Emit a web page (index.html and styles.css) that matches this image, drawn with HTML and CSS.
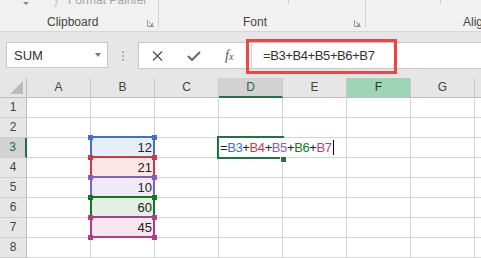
FILE: index.html
```html
<!DOCTYPE html>
<html lang="en">
<head>
    <meta charset="UTF-8">
    <title>Excel - SUM formula</title>
    <link rel="stylesheet" href="styles.css">
</head>
<body>
    <div class="ribbon">
        <div class="group clipboard">
            <div class="group-top">
                <span class="paste-arrow"></span>
                <svg class="brush" width="14" height="16" viewBox="0 0 14 16">
                    <path d="M2 6 L8 1 L12 5 L7 10 Z" fill="#d2d2d2"/>
                    <path d="M7 10 L5 15" stroke="#d2d2d2" stroke-width="2"/>
                </svg>
                <span class="faded">Format Painter</span>
            </div>
            <div class="group-label">
                <span>Clipboard</span>
                <svg class="launcher" width="7" height="7" viewBox="0 0 7 7">
                    <path d="M0.5 0 V6.5 H7" fill="none" stroke="#999" stroke-width="1"/>
                    <path d="M2 2 L5.5 5.5 M3 5.5 H5.5 V3" fill="none" stroke="#999" stroke-width="1"/>
                </svg>
            </div>
        </div>
        <div class="sep"></div>
        <div class="group font">
            <div class="group-top"><span class="tick tick-font"></span></div>
            <div class="group-label">
                <span>Font</span>
                <svg class="launcher" width="7" height="7" viewBox="0 0 7 7">
                    <path d="M0.5 0 V6.5 H7" fill="none" stroke="#999" stroke-width="1"/>
                    <path d="M2 2 L5.5 5.5 M3 5.5 H5.5 V3" fill="none" stroke="#999" stroke-width="1"/>
                </svg>
            </div>
        </div>
        <div class="sep"></div>
        <div class="group align">
            <div class="group-top"><span class="tick tick-align"></span></div>
            <div class="group-label"><span>Alig</span></div>
        </div>
    </div>

    <div class="formula-bar">
        <div class="name-box">
            <span>SUM</span>
            <span class="drop"></span>
        </div>
        <div class="grip"></div>
        <div class="formula-box">
            <div class="fx-buttons">
                <svg class="btn-cancel" width="11" height="10" viewBox="0 0 11 10">
                    <path d="M1 0.5 L10 9.5 M10 0.5 L1 9.5" stroke="#555" stroke-width="1.4"/>
                </svg>
                <svg class="btn-enter" width="14" height="10" viewBox="0 0 14 10">
                    <path d="M1 5 L5 9 L13 1" fill="none" stroke="#666" stroke-width="2"/>
                </svg>
                <span class="fx">f<sub>x</sub></span>
            </div>
            <div class="formula-input">=B3+B4+B5+B6+B7</div>
        </div>
        <div class="highlight"></div>
    </div>

    <div class="sheet">
        <div class="corner"><span class="corner-tri"></span></div>
        <div class="ch">A</div>
        <div class="ch">B</div>
        <div class="ch">C</div>
        <div class="ch col-active">D</div>
        <div class="ch">E</div>
        <div class="ch col-hover">F</div>
        <div class="ch">G</div>
        <div class="ch"></div>

        <div class="rh">1</div>
        <div class="c"></div><div class="c"></div><div class="c"></div><div class="c"></div><div class="c"></div><div class="c"></div><div class="c"></div><div class="c"></div>

        <div class="rh">2</div>
        <div class="c"></div><div class="c"></div><div class="c"></div><div class="c"></div><div class="c"></div><div class="c"></div><div class="c"></div><div class="c"></div>

        <div class="rh row-active">3</div>
        <div class="c"></div>
        <div class="c num ref ref-blue"><i class="h tl"></i><i class="h tr"></i>12</div>
        <div class="c"></div>
        <div class="c active">
            <div class="editor">=<span class="t-blue">B3</span>+<span class="t-red">B4</span>+<span class="t-purple">B5</span>+<span class="t-green">B6</span>+<span class="t-pink">B7</span><span class="caret"></span></div>
            <span class="fill-handle"></span>
        </div>
        <div class="c"></div><div class="c"></div><div class="c"></div><div class="c"></div>

        <div class="rh">4</div>
        <div class="c"></div>
        <div class="c num ref ref-red"><i class="h tl"></i><i class="h tr"></i>21</div>
        <div class="c"></div><div class="c"></div><div class="c"></div><div class="c"></div><div class="c"></div><div class="c"></div>

        <div class="rh">5</div>
        <div class="c"></div>
        <div class="c num ref ref-purple"><i class="h tl"></i><i class="h tr"></i>10</div>
        <div class="c"></div><div class="c"></div><div class="c"></div><div class="c"></div><div class="c"></div><div class="c"></div>

        <div class="rh">6</div>
        <div class="c"></div>
        <div class="c num ref ref-green"><i class="h tl"></i><i class="h tr"></i>60</div>
        <div class="c"></div><div class="c"></div><div class="c"></div><div class="c"></div><div class="c"></div><div class="c"></div>

        <div class="rh">7</div>
        <div class="c"></div>
        <div class="c num ref ref-pink"><i class="h tl"></i><i class="h tr"></i><i class="h bl"></i><i class="h br"></i>45</div>
        <div class="c"></div><div class="c"></div><div class="c"></div><div class="c"></div><div class="c"></div><div class="c"></div>

        <div class="rh">8</div>
        <div class="c"></div><div class="c"></div><div class="c"></div><div class="c"></div><div class="c"></div><div class="c"></div><div class="c"></div><div class="c"></div>
    </div>
</body>
</html>
```

FILE: styles.css
```css
body {
    margin: 0;
    width: 481px;
    height: 258px;
    overflow: hidden;
    font-family: "Liberation Sans", Arial, sans-serif;
    background-color: #fff;
}

/* ribbon */

.ribbon {
    display: flex;
    align-items: flex-start;
    height: 31px;
    background-color: #f1f1f1;
    border-bottom: 1px solid #d6d6d6;
    overflow: hidden;
}

.group {
    display: flex;
    flex-direction: column;
    justify-content: space-between;
    flex-shrink: 0;
    height: 31px;
    font-size: 12px;
    color: #444;
    white-space: nowrap;
}

.clipboard {
    width: 158px;
}

.font {
    width: 206px;
}

.align {
    width: 115px;
}

.sep {
    flex-shrink: 0;
    width: 1px;
    height: 27px;
    background-color: #d5d5d5;
}

.group-top {
    display: flex;
    align-items: center;
    height: 16px;
    margin-top: -8px;
    line-height: 16px;
}

.paste-arrow {
    margin-left: 23px;
    margin-top: 6px;
    border-left: 3px solid transparent;
    border-right: 3px solid transparent;
    border-top: 3px solid #8a8a8a;
}

.brush {
    margin-left: 21px;
}

.faded {
    margin-left: 4px;
    color: #a4a4a4;
}

.tick {
    align-self: flex-start;
    margin-top: 8px;
    width: 1px;
    height: 4px;
    background-color: #cdcdcd;
}

.tick-font {
    margin-left: 129px;
}

.tick-align {
    margin-left: 74px;
}

.group-label {
    display: flex;
    align-items: center;
    height: 16px;
    line-height: 16px;
    padding-bottom: 1px;
    padding-right: 4px;
}

.clipboard .group-label {
    padding-left: 47px;
}

.font .group-label {
    padding-left: 84px;
}

.align .group-label {
    padding-left: 97px;
}

.launcher {
    margin-left: auto;
    margin-top: 2px;
}

/* formula bar */

.formula-bar {
    position: relative;
    display: flex;
    align-items: flex-start;
    height: 46px;
    padding: 10px 0 0 6px;
    box-sizing: border-box;
    background-color: #e6e6e6;
}

.name-box {
    display: flex;
    align-items: center;
    width: 102px;
    height: 26px;
    box-sizing: border-box;
    padding: 0 6px 0 7px;
    background-color: #fff;
    border: 1px solid #c6c6c6;
    font-size: 13px;
    color: #333;
}

.drop {
    margin-left: auto;
    border-left: 3px solid transparent;
    border-right: 3px solid transparent;
    border-top: 4px solid #7a7a7a;
}

.grip {
    width: 2px;
    height: 10px;
    margin: 9px 14px 0 14px;
    border-left: 2px dotted #b4b4b4;
    box-sizing: border-box;
}

.formula-box {
    display: flex;
    flex: 1;
    height: 25px;
    margin-right: -4px;
    background-color: #fff;
    border: 1px solid #c6c6c6;
}

.fx-buttons {
    display: flex;
    align-items: center;
    width: 112px;
}

.btn-cancel {
    margin-left: 13px;
}

.btn-enter {
    margin-left: 24px;
}

.fx {
    margin-left: 24px;
    font-family: "Liberation Serif", serif;
    font-style: italic;
    font-size: 14px;
    color: #555;
}

.fx sub {
    font-size: 10px;
    vertical-align: 0;
}

.formula-input {
    flex: 1;
    padding-left: 11px;
    border-left: 1px solid #d0d0d0;
    font-size: 13px;
    letter-spacing: -0.4px;
    line-height: 25px;
    color: #333;
}

.highlight {
    position: absolute;
    left: 246px;
    top: 7px;
    width: 151px;
    height: 35px;
    box-sizing: border-box;
    border: 3px solid #ee4545;
}

/* sheet */

.sheet {
    display: grid;
    grid-template-columns: 27px repeat(8, 64px);
    grid-auto-rows: 20px;
}

.c,
.ch,
.rh,
.corner {
    box-sizing: border-box;
    border-right: 1px solid #d4d4d4;
    border-bottom: 1px solid #d4d4d4;
    font-size: 13px;
    line-height: 19px;
}

.ch,
.rh,
.corner {
    background-color: #e6e6e6;
    color: #444;
    font-size: 12px;
    text-align: center;
}

.ch {
    border-right-color: #c9c9c9;
    border-bottom-color: #bcbcbc;
}

.rh {
    border-right-color: #bcbcbc;
    border-bottom-color: #cfcfcf;
}

.corner {
    position: relative;
    border-right-color: #bcbcbc;
    border-bottom-color: #bcbcbc;
}

.corner-tri {
    position: absolute;
    right: 3px;
    bottom: 3px;
    border-left: 13px solid transparent;
    border-bottom: 13px solid #b9b9b9;
}

.col-active {
    background-color: #d2d2d2;
    border-bottom: 2px solid #217346;
    color: #1e6b42;
}

.col-hover {
    background-color: #9fd5b7;
    color: #333;
}

.row-active {
    background-color: #d2d2d2;
    border-right: 2px solid #217346;
    color: #1e6b42;
}

.num {
    text-align: right;
    padding-right: 2px;
    color: #222;
}

/* referenced range */

.ref {
    position: relative;
}

.ref::before {
    content: "";
    position: absolute;
    left: -1px;
    right: -1px;
    top: -2px;
    bottom: -1px;
    border: 2px solid var(--ref);
}

.ref .h {
    position: absolute;
    width: 5px;
    height: 5px;
    background-color: var(--ref);
}

.h.tl { left: -3px; top: -3px; }
.h.tr { right: -3px; top: -3px; }
.h.bl { left: -3px; bottom: -3px; }
.h.br { right: -3px; bottom: -3px; }

.ref-blue { --ref: #3f6fcf; background-color: #e6eefa; }
.ref-red { --ref: #c83b3e; background-color: #fae6e6; }
.ref-purple { --ref: #8460c0; background-color: #efebf6; }
.ref-green { --ref: #11781e; background-color: #e3f0e3; }
.ref-pink { --ref: #b33d84; background-color: #f6e6ef; }

/* active cell in edit mode */

.active {
    position: relative;
}

.active::after {
    content: "";
    position: absolute;
    inset: -2px;
    border: 2px solid #217346;
}

.editor {
    position: absolute;
    left: 0;
    top: 0;
    z-index: 1;
    display: flex;
    align-items: center;
    width: 117px;
    height: 19px;
    padding-left: 1px;
    box-sizing: border-box;
    background-color: #fff;
    letter-spacing: -0.4px;
    color: #222;
    white-space: nowrap;
}

.t-blue { color: #3a73d4; }
.t-red { color: #d33b3b; }
.t-purple { color: #8460c0; }
.t-green { color: #118020; }
.t-pink { color: #b33d8c; }

.caret {
    width: 1px;
    height: 15px;
    margin-left: 1px;
    background-color: #000;
}

.fill-handle {
    position: absolute;
    left: 61px;
    top: 18px;
    z-index: 2;
    width: 5px;
    height: 5px;
    background-color: #217346;
    border: 1px solid #fff;
}
```
